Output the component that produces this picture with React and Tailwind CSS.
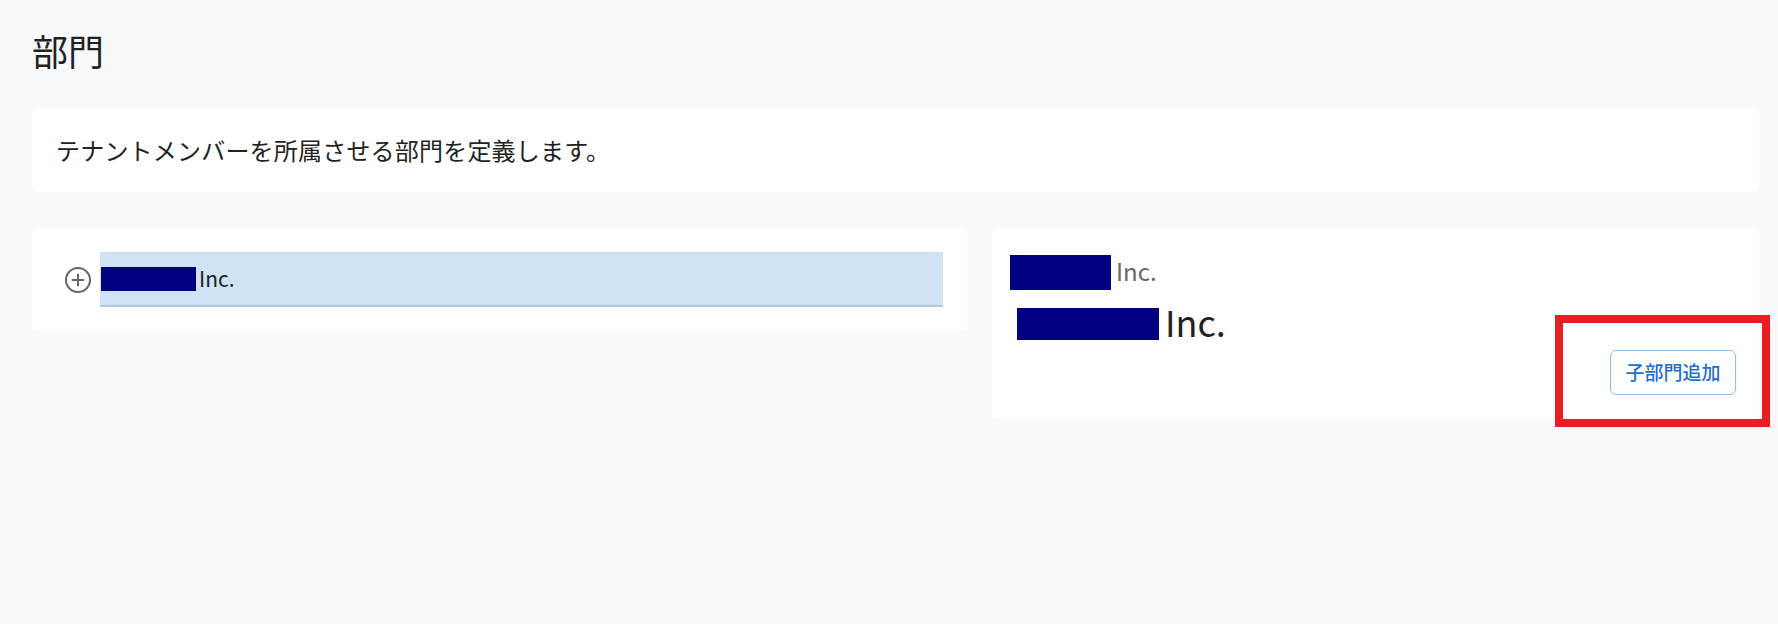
import React from 'react';

const Redacted = ({ className }) => <span className={`inline-block bg-[#000080] ${className}`} />;

const PlusCircle = () => (
  <svg width="28" height="28" viewBox="0 0 24 24" fill="none" stroke="#666" strokeWidth="1.7" strokeLinecap="round">
    <circle cx="12" cy="12" r="10.3" />
    <path d="M12 7.3v9.4M7.3 12h9.4" />
  </svg>
);

const App = () => {
  return (
    <div className="relative min-h-[624px] bg-[#f8f9fb] pl-8 pr-[19px] pt-[23px] text-[#222] font-['Noto_Sans_CJK_JP','Noto_Sans',sans-serif]">
      <h1 className="text-[36px] leading-[54px] font-normal">部門</h1>

      <div className="mt-[31px] h-[84px] flex items-center px-6 bg-white rounded-md">
        <p className="text-[24px] leading-9 tracking-[0.2px]">テナントメンバーを所属させる部門を定義します。</p>
      </div>

      <div className="mt-9 flex items-start gap-[25px]">
        <div className="w-[935px] bg-white rounded-md px-6 pt-6 pb-6">
          <div className="flex items-center">
            <div className="w-[44px] flex justify-center">
              <PlusCircle />
            </div>
            <div className="flex-1 h-[55px] flex items-center bg-[#d0e3f4] border-b-2 border-[#b2c7dc] pl-px">
              <Redacted className="w-[95px] h-[24px]" />
              <span className="ml-[3px] text-[21px] leading-none">Inc.</span>
            </div>
          </div>
        </div>

        <div className="flex-1 bg-white rounded-md pl-[18px] pr-[23px] pt-[27px] pb-6">
          <div className="flex items-center h-[35px]">
            <Redacted className="w-[101px] h-[35px]" />
            <span className="relative -top-[2px] ml-[5px] text-[24px] leading-none text-[#666]">Inc.</span>
          </div>
          <div className="mt-[18px] ml-[7px] flex items-center h-[32px]">
            <Redacted className="w-[142px] h-[32px]" />
            <span className="relative -top-[3px] ml-[6px] text-[36px] leading-none">Inc.</span>
          </div>
          <div className="mt-[10px] flex justify-end">
            <button className="relative w-[126px] h-[45px] rounded-md border border-[#90bde8] bg-white text-[#1f6fcf] text-[19px] font-medium">
              子部門追加
              <span className="pointer-events-none absolute -left-[56px] -top-[36px] w-[215px] h-[112px] border-[8px] border-[#ec1c24]" />
            </button>
          </div>
        </div>
      </div>
    </div>
  );
};

export default App;
